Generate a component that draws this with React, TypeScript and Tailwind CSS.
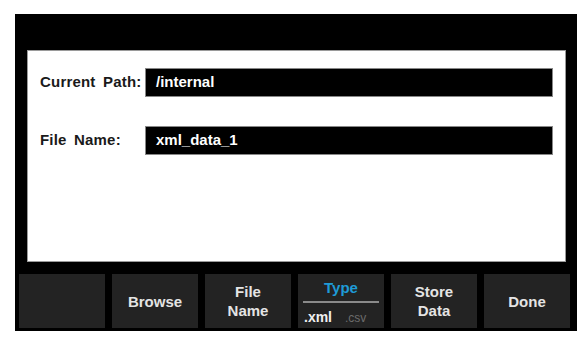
import React from "react";

const font = { fontFamily: '"Liberation Sans", Arial, sans-serif' };

function SoftKey({ children }: { children?: React.ReactNode }) {
  return (
    <div className="flex h-[54px] w-[86px] flex-col items-center justify-center bg-[#232323] text-[15px] font-bold leading-[19px] text-[#e4e4e4]">
      {children}
    </div>
  );
}

export default function App() {
  return (
    <div className="h-[347px] w-[588px] bg-white pt-[14px] pl-[15px]" style={font}>
      <div className="flex h-[317px] w-[562px] flex-col bg-black">
        <div className="mt-[36px] ml-[12px] h-[212px] w-[539px] border border-[#9a9a9a] bg-white">
          <div className="flex flex-col gap-[29px] pt-[17px]">
            <div className="flex items-center">
              <span className="w-[117px] pl-[12px] text-[15px] font-bold tracking-[0.2px] text-[#1a1a1a] [word-spacing:3px]">
                Current Path:
              </span>
              <div className="flex h-[29px] w-[408px] items-center border border-[#888] bg-black pl-[10px] text-[15px] font-bold text-white">
                /internal
              </div>
            </div>
            <div className="flex items-center">
              <span className="w-[117px] pl-[12px] text-[15px] font-bold tracking-[0.2px] text-[#1a1a1a] [word-spacing:3px]">
                File Name:
              </span>
              <div className="flex h-[29px] w-[408px] items-center border border-[#888] bg-black pl-[10px] text-[15px] font-bold text-white">
                xml_data_1
              </div>
            </div>
          </div>
        </div>
        <div className="mt-[12px] ml-[4px] flex gap-[7px]">
          <SoftKey />
          <SoftKey>Browse</SoftKey>
          <SoftKey>
            <span>File</span>
            <span>Name</span>
          </SoftKey>
          <div className="flex h-[54px] w-[86px] flex-col items-center bg-[#232323] pt-[4px] font-bold">
            <span className="text-[15px] leading-[20px] text-[#1e9ad6]">Type</span>
            <div className="mt-[3px] h-[2px] w-[76px] bg-[#8a8a8a]" />
            <div className="mt-[4px] flex w-[76px] items-baseline gap-[13px] pl-[1px]">
              <span className="text-[14px] text-[#f0f0f0]">.xml</span>
              <span className="text-[12px] font-normal text-[#6c6c6c]">.csv</span>
            </div>
          </div>
          <SoftKey>
            <span>Store</span>
            <span>Data</span>
          </SoftKey>
          <SoftKey>Done</SoftKey>
        </div>
      </div>
    </div>
  );
}
